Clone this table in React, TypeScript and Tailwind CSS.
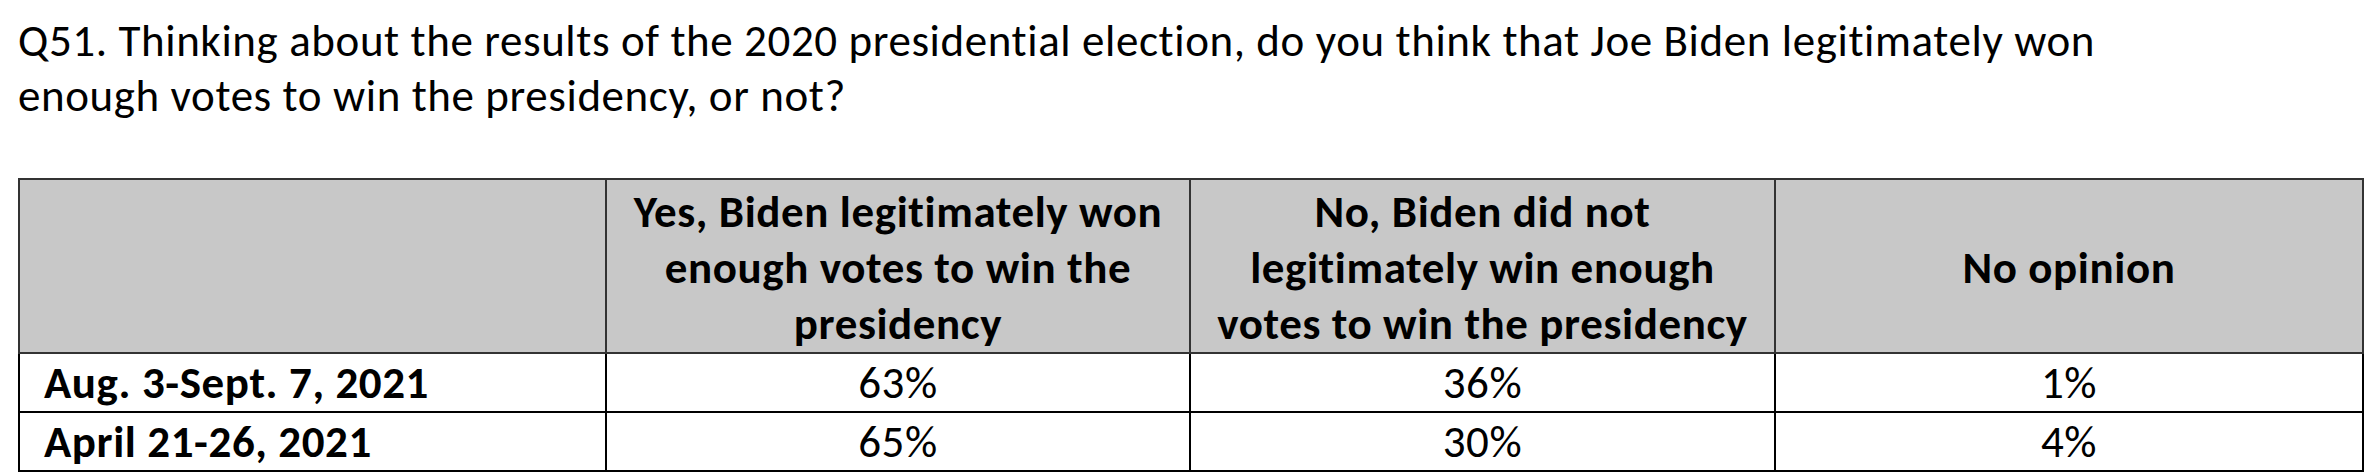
const rows = [
  { date: "Aug. 3-Sept. 7, 2021", yes: "63%", no: "36%", none: "1%" },
  { date: "April 21-26, 2021", yes: "65%", no: "30%", none: "4%" },
];

export default function App() {
  return (
    <div className="w-[2374px] h-[472px] overflow-hidden bg-white text-black tracking-[0.6px] font-['Carlito','Calibri','Lato',sans-serif]">
      <p className="pl-[18px] pt-[13px] text-[45px] leading-[55px] whitespace-nowrap">
        Q51. Thinking about the results of the 2020 presidential election, do you think that Joe Biden legitimately won
        <br />
        enough votes to win the presidency, or not?
      </p>

      <table className="ml-[18px] mt-[55px] w-[2344px] table-fixed border-collapse border-2 border-black text-[45px] leading-[56px]">
        <colgroup>
          <col className="w-[587px]" />
          <col className="w-[584px]" />
          <col className="w-[585px]" />
          <col className="w-[588px]" />
        </colgroup>
        <thead>
          <tr className="h-[173px] bg-[#c8c8c8] font-bold">
            <th className="border-2 border-[#333]"></th>
            <th className="border-2 border-[#333] text-center align-middle pt-[4px]">
              Yes, Biden legitimately won
              <br />
              enough votes to win the
              <br />
              presidency
            </th>
            <th className="border-2 border-[#333] text-center align-middle pt-[4px]">
              No, Biden did not
              <br />
              legitimately win enough
              <br />
              votes to win the presidency
            </th>
            <th className="border-2 border-[#333] text-center align-middle pt-[4px]">No opinion</th>
          </tr>
        </thead>
        <tbody>
          {rows.map((r) => (
            <tr key={r.date} className="h-[59px]">
              <td className="border-2 border-black pl-[24px] font-bold align-bottom whitespace-nowrap">{r.date}</td>
              <td className="border-2 border-black text-center align-bottom">{r.yes}</td>
              <td className="border-2 border-black text-center align-bottom">{r.no}</td>
              <td className="border-2 border-black text-center align-bottom">{r.none}</td>
            </tr>
          ))}
        </tbody>
      </table>
    </div>
  );
}
